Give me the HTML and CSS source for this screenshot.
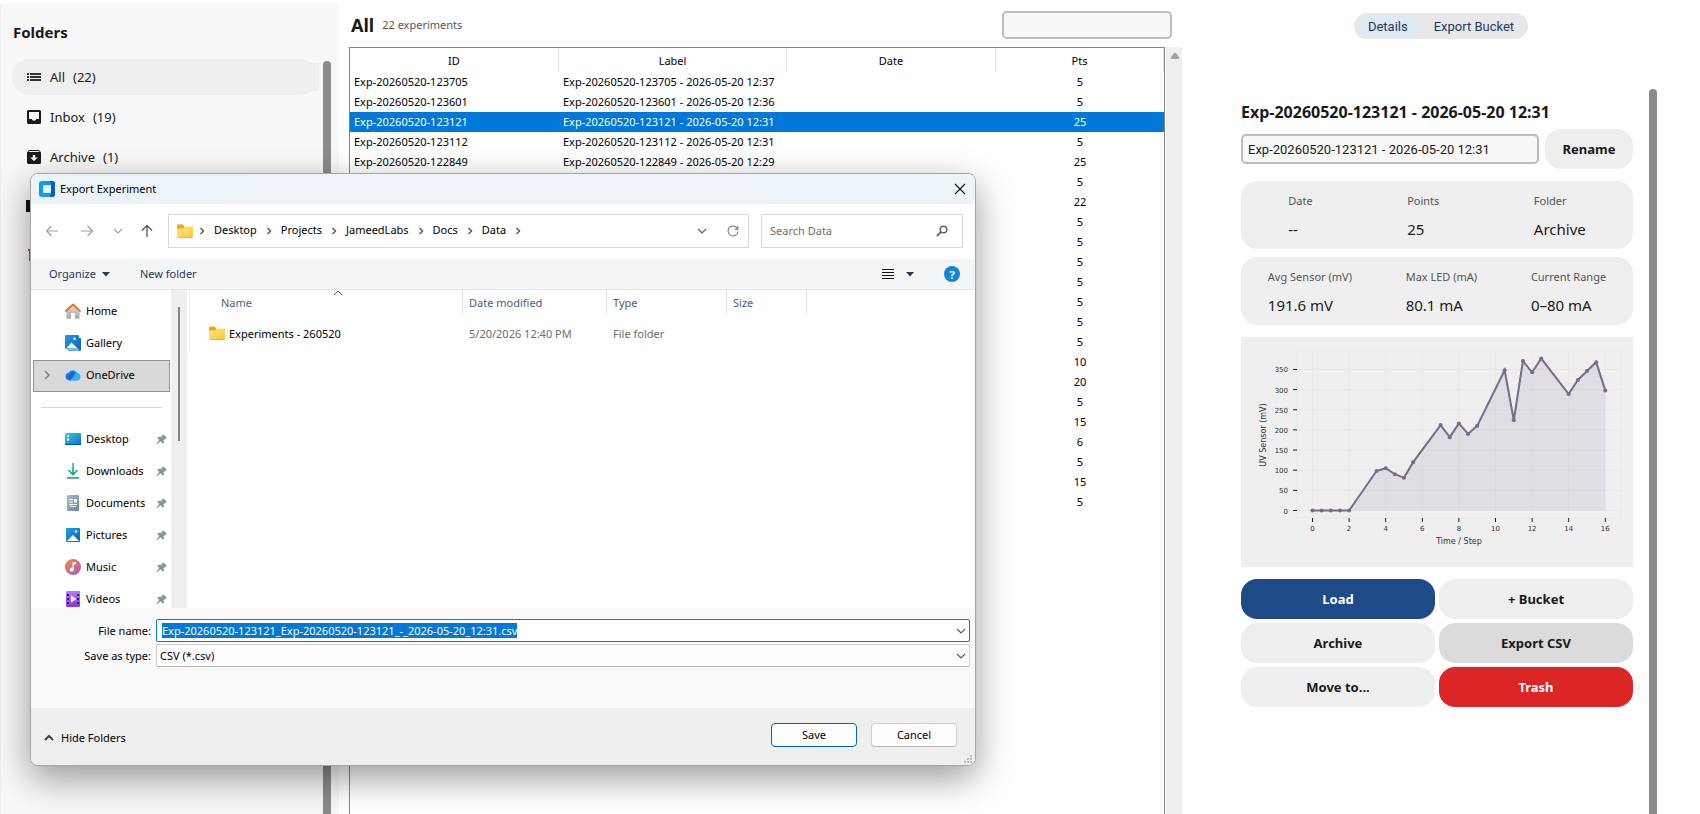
FILE: index.html
```
<!DOCTYPE html>
<html lang="en">

<head>
  <meta charset="UTF-8">
  <meta name="viewport" content="width=device-width, initial-scale=1.0">
  <title>Experiments</title>

  <link rel="stylesheet" href="styles.css">
</head>

<body>
  <div class="app">
    <aside class="sidebar">
      <div class="sidebar-main">
        <h2>Folders</h2>
        <nav class="folders">
          <button class="folder active">
            <svg width="16" height="16" viewBox="0 0 16 16" fill="#333"><path d="M1 4h2v2H1zM1 7h2v2H1zM1 10h2v2H1zM4 4h11v2H4zM4 7h11v2H4zM4 10h11v2H4z"/></svg>
            <span>All</span><span>(22)</span>
          </button>
          <button class="folder">
            <svg width="16" height="16" viewBox="0 0 16 16" fill="#1a1a1a"><path fill-rule="evenodd" d="M2.500 1h11A1.500 1.500 0 0 1 15 2.500v11a1.500 1.500 0 0 1-1.500 1.500h-11A1.500 1.500 0 0 1 1 13.500v-11A1.500 1.500 0 0 1 2.500 1zM3 3v7h2.700a2.400 2.400 0 0 0 4.600 0H13V3z"/></svg>
            <span>Inbox</span><span>(19)</span>
          </button>
          <button class="folder">
            <svg width="16" height="16" viewBox="0 0 16 16" fill="#1a1a1a"><path fill-rule="evenodd" d="M3 1h10l2 2.500v10a1.500 1.500 0 0 1-1.500 1.500h-11A1.500 1.500 0 0 1 1 13.500v-10zM3.200 2l-.7 1h11l-.7-1zM6.800 6v2.500H4.200L8 12l3.800-3.500H9.200V6z"/></svg>
            <span>Archive</span><span>(1)</span>
          </button>
          <button class="folder spaced" aria-label="Folder">
            <svg width="16" height="16" viewBox="0 0 16 16"><path fill="#111" d="M0 2h16v12H0z"/></svg>
          </button>
          <button class="folder spaced" aria-label="Trash">
            <svg width="16" height="16" viewBox="0 0 16 16" fill="#d9442f"><path d="M2 2h12v2H2zM3 4h10v10H3z"/></svg>
          </button>
        </nav>
      </div>
      <div class="thumb sidebar-thumb"></div>
    </aside>

    <main class="experiments">
      <header class="list-head">
        <h1>All</h1>
        <span class="count">22 experiments</span>
        <input type="text" class="filter" aria-label="Filter experiments">
      </header>
      <div class="list">
        <div class="table-box">
          <table>
            <thead>
              <tr><th class="c-id">ID</th><th class="c-label">Label</th><th class="c-date">Date</th><th>Pts</th></tr>
            </thead>
            <tbody>
              <tr><td>Exp-20260520-123705</td><td>Exp-20260520-123705 - 2026-05-20 12:37</td><td></td><td>5</td></tr>
              <tr><td>Exp-20260520-123601</td><td>Exp-20260520-123601 - 2026-05-20 12:36</td><td></td><td>5</td></tr>
              <tr class="selected"><td>Exp-20260520-123121</td><td>Exp-20260520-123121 - 2026-05-20 12:31</td><td></td><td>25</td></tr>
              <tr><td>Exp-20260520-123112</td><td>Exp-20260520-123112 - 2026-05-20 12:31</td><td></td><td>5</td></tr>
              <tr><td>Exp-20260520-122849</td><td>Exp-20260520-122849 - 2026-05-20 12:29</td><td></td><td>25</td></tr>
              <tr><td></td><td></td><td></td><td>5</td></tr>
              <tr><td></td><td></td><td></td><td>22</td></tr>
              <tr><td></td><td></td><td></td><td>5</td></tr>
              <tr><td></td><td></td><td></td><td>5</td></tr>
              <tr><td></td><td></td><td></td><td>5</td></tr>
              <tr><td></td><td></td><td></td><td>5</td></tr>
              <tr><td></td><td></td><td></td><td>5</td></tr>
              <tr><td></td><td></td><td></td><td>5</td></tr>
              <tr><td></td><td></td><td></td><td>5</td></tr>
              <tr><td></td><td></td><td></td><td>10</td></tr>
              <tr><td></td><td></td><td></td><td>20</td></tr>
              <tr><td></td><td></td><td></td><td>5</td></tr>
              <tr><td></td><td></td><td></td><td>15</td></tr>
              <tr><td></td><td></td><td></td><td>6</td></tr>
              <tr><td></td><td></td><td></td><td>5</td></tr>
              <tr><td></td><td></td><td></td><td>15</td></tr>
              <tr><td></td><td></td><td></td><td>5</td></tr>
            </tbody>
          </table>
        </div>
        <div class="table-scroll">
          <svg width="10" height="8" viewBox="0 0 10 8"><path fill="#a3a3a3" d="M4 1h2l3 4v2H1V5z"/></svg>
        </div>
      </div>
    </main>

    <section class="details">
      <div class="tabs">
        <button class="tab on">Details</button>
        <button class="tab">Export Bucket</button>
      </div>
      <div class="details-scroll">
        <div class="details-body">
          <h3>Exp-20260520-123121 - 2026-05-20 12:31</h3>
          <div class="rename">
            <input type="text" aria-label="Experiment label" value="Exp-20260520-123121 - 2026-05-20 12:31">
            <button class="btn">Rename</button>
          </div>
          <div class="card">
            <div class="stat"><span>Date</span><b>--</b></div>
            <div class="stat"><span>Points</span><b>25</b></div>
            <div class="stat"><span>Folder</span><b>Archive</b></div>
          </div>
          <div class="card">
            <div class="stat"><span>Avg Sensor (mV)</span><b>191.6 mV</b></div>
            <div class="stat"><span>Max LED (mA)</span><b>80.1 mA</b></div>
            <div class="stat"><span>Current Range</span><b>0–80 mA</b></div>
          </div>
          <svg class="chart" id="chart" viewBox="0 0 392 230">
            <rect class="frame" x="56" y="14" width="324" height="167"/>
          </svg>
          <div class="actions">
            <button class="btn load">Load</button>
            <button class="btn">+ Bucket</button>
            <button class="btn">Archive</button>
            <button class="btn pressed">Export CSV</button>
            <button class="btn">Move to...</button>
            <button class="btn trash">Trash</button>
          </div>
        </div>
        <div class="thumb"></div>
      </div>
    </section>
  </div>

  <svg class="defs" width="0" height="0">
    <defs>
      <linearGradient id="gFolder" x1="0" y1="0" x2="1" y2="1"><stop offset="0" stop-color="#ffe59a"/><stop offset="1" stop-color="#ffc62e"/></linearGradient>
      <linearGradient id="gBlue" x1="0" y1="0" x2="1" y2="1"><stop offset="0" stop-color="#1f9fe8"/><stop offset="1" stop-color="#0a66b8"/></linearGradient>
      <linearGradient id="gDesk" x1="0" y1="0" x2="1" y2="1"><stop offset="0" stop-color="#33d1dc"/><stop offset="1" stop-color="#0f6cc4"/></linearGradient>
      <linearGradient id="gHome" x1="0" y1="0" x2="0" y2="1"><stop offset="0" stop-color="#e0e0e0"/><stop offset="1" stop-color="#a8a8a8"/></linearGradient>
      <linearGradient id="gMusic" x1="0" y1="0" x2="1" y2="1"><stop offset="0" stop-color="#f58a4b"/><stop offset="1" stop-color="#a95bb5"/></linearGradient>
      <linearGradient id="gVideo" x1="0" y1="0" x2="0" y2="1"><stop offset="0" stop-color="#b57cf5"/><stop offset="1" stop-color="#8738dd"/></linearGradient>
      <linearGradient id="gDoc" x1="0" y1="0" x2="1" y2="1"><stop offset="0" stop-color="#a9bdd3"/><stop offset="1" stop-color="#6a85a5"/></linearGradient>
      <linearGradient id="gCloud" x1="0" y1="0" x2="1" y2="0"><stop offset="0" stop-color="#1c6fe8"/><stop offset="1" stop-color="#0ac4ff"/></linearGradient>
      <linearGradient id="gDown" x1="0" y1="0" x2="0" y2="1"><stop offset="0" stop-color="#35c98b"/><stop offset="1" stop-color="#12a08f"/></linearGradient>
      <symbol id="folder" viewBox="0 0 16 16"><path fill="#f0a800" d="M0 2.500A1 1 0 0 1 1 1.500h4.500L7.500 3.500V6H0z"/><path fill="url(#gFolder)" d="M0 5.500h6L8 3.500h7a1 1 0 0 1 1 1v9a1 1 0 0 1-1 1H1a1 1 0 0 1-1-1z"/><path fill="#e5a823" d="M.5 14h15v.8H.5z"/></symbol>
      <symbol id="pin" viewBox="0 0 12 12"><path fill="#8a97a0" d="M7 1l4.200 4-1.500.5-2 2 .1 2.500-1 .7-2.300-2.200L1 11.300l-.7-.6 3-3.700L1.200 4.800l.9-1 2.600.2 1.800-1.800z"/></symbol>
      <symbol id="chev" viewBox="0 0 12 12"><path fill="none" stroke="#5e5e5e" stroke-width="1.200" d="M2 4l4 4 4-4"/></symbol>
      <symbol id="crumb" viewBox="0 0 8 8"><path fill="none" stroke="#555" stroke-width="1.400" d="M2.500 1l3 3-3 3"/></symbol>
    </defs>
  </svg>

  <div class="dialog" role="dialog" aria-label="Export Experiment">
    <div class="titlebar">
      <svg width="16" height="16" viewBox="0 0 16 16"><rect width="16" height="16" rx="3" fill="#0a9bff"/><path fill="#0560b8" d="M11 0h2a3 3 0 0 1 3 3v10a3 3 0 0 1-3 3h-2l1-3V3z"/><rect x="4" y="4" width="8" height="8" rx="1" fill="#eaf6ff"/></svg>
      <span>Export Experiment</span>
      <button class="close" aria-label="Close"><svg width="12" height="12" viewBox="0 0 12 12"><path stroke="#111" stroke-width="1.200" d="M1 1l10 10M11 1L1 11"/></svg></button>
    </div>

    <div class="navbar">
      <button aria-label="Back"><svg width="14" height="14" viewBox="0 0 14 14" fill="none" stroke="#a0a0a0" stroke-width="1.200"><path d="M13 7H1.500M6.500 2l-5 5 5 5"/></svg></button>
      <button aria-label="Forward"><svg width="14" height="14" viewBox="0 0 14 14" fill="none" stroke="#a0a0a0" stroke-width="1.200"><path d="M1 7h11.500M7.500 2l5 5-5 5"/></svg></button>
      <button class="small" aria-label="Recent locations"><svg width="12" height="12"><use href="#chev" opacity=".6"/></svg></button>
      <button class="up" aria-label="Up"><svg width="14" height="14" viewBox="0 0 14 14" fill="none" stroke="#555" stroke-width="1.300"><path d="M7 13V1.500M2 6.500l5-5 5 5"/></svg></button>
      <div class="address">
        <svg width="16" height="16"><use href="#folder"/></svg>
        <svg width="8" height="8"><use href="#crumb"/></svg>
        <a href="#">Desktop</a>
        <svg width="8" height="8"><use href="#crumb"/></svg>
        <a href="#">Projects</a>
        <svg width="8" height="8"><use href="#crumb"/></svg>
        <a href="#">JameedLabs</a>
        <svg width="8" height="8"><use href="#crumb"/></svg>
        <a href="#">Docs</a>
        <svg width="8" height="8"><use href="#crumb"/></svg>
        <a href="#">Data</a>
        <svg width="8" height="8"><use href="#crumb"/></svg>
        <button class="history" aria-label="Previous locations"><svg width="12" height="12"><use href="#chev"/></svg></button>
        <button aria-label="Refresh"><svg width="12" height="12" viewBox="0 0 14 14" fill="none" stroke="#707070" stroke-width="1.200"><path d="M12.500 5A5.800 5.800 0 1 0 12.800 7.500M12.600 1v4H8.800"/></svg></button>
      </div>
      <div class="search">
        <input type="text" placeholder="Search Data" aria-label="Search Data">
        <svg width="12" height="12" viewBox="0 0 12 12" fill="none" stroke="#666"><circle cx="7.500" cy="4.500" r="3.300" stroke-width="1.500"/><path stroke-width="1.800" d="M5 7L.8 11.200"/></svg>
      </div>
    </div>

    <div class="toolbar">
      <button><span>Organize</span><svg width="8" height="5" viewBox="0 0 8 5"><path fill="#1e395b" d="M0 0h8L4 4.500z"/></svg></button>
      <button><span>New folder</span></button>
      <button class="view" aria-label="View"><svg width="12" height="11" viewBox="0 0 12 11"><path fill="#111" d="M0 0h12v1H0zM0 3h12v1H0zM0 6h12v1H0zM0 9h12v1H0z"/></svg></button>
      <button aria-label="More views"><svg width="8" height="5" viewBox="0 0 8 5"><path fill="#1e395b" d="M0 0h8L4 4.500z"/></svg></button>
      <button class="help" aria-label="Help">?</button>
    </div>

    <div class="browser">
      <nav class="places">
        <a href="#"><svg width="16" height="16" viewBox="0 0 16 16"><path fill="url(#gHome)" d="M1.500 7L8 1.500 14.500 7v8a.8.8 0 0 1-.8.8H10V10H6v5.800H2.300a.8.8 0 0 1-.8-.8z"/><path fill="none" stroke="#e8731f" stroke-width="1.800" stroke-linecap="round" stroke-linejoin="round" d="M1 8l7-6.500L15 8"/></svg><span>Home</span></a>
        <a href="#"><svg width="16" height="16" viewBox="0 0 16 16"><path fill="#1c6cb8" d="M3 3h12a1 1 0 0 1 1 1v11a1 1 0 0 1-1 1H3z"/><path fill="#8db9e2" d="M2 14h12v1.800H3z"/><rect width="14" height="14" rx="1" fill="url(#gBlue)"/><path fill="#eaf5ff" d="M1 13.500L6.500 7.500 13 13.500z"/><circle cx="9.500" cy="3.800" r="1.200" fill="#fff"/></svg><span>Gallery</span></a>
        <a href="#" class="current"><svg class="arrow" width="8" height="10" viewBox="0 0 8 10"><path fill="none" stroke="#808080" stroke-width="1.500" d="M2 1l4 4-4 4"/></svg><svg width="16" height="16" viewBox="0 0 16 16"><path fill="url(#gCloud)" d="M4 13.500A4 4 0 0 1 3.500 5.700 5 5 0 0 1 12.300 6 3.800 3.800 0 0 1 12.200 13.500z"/><path fill="#1a4fc7" opacity=".7" d="M5 13.300L10.500 5.500 7.500 4.500 2.500 10z"/><path fill="#4bb4ff" d="M5.500 13.500L11 6.500l3.500 2-2 5z" opacity=".6"/></svg><span>OneDrive</span></a>
        <hr>
        <a href="#"><svg width="16" height="16" viewBox="0 0 16 16"><rect y="2" width="16" height="12" rx="1" fill="url(#gDesk)"/><path fill="#fff" d="M2 4h2v2H2zM2 7.500h2v2H2z"/><path fill="#0b4f96" d="M0 13h16v1H0z"/></svg><span>Desktop</span><svg class="pin" width="12" height="12"><use href="#pin"/></svg></a>
        <a href="#"><svg width="16" height="16" viewBox="0 0 16 16"><path fill="none" stroke="url(#gDown)" stroke-width="1.700" d="M3.500 7L8 11.500 12.500 7M8.010 0L8 11.500"/><path fill="#22b889" d="M2 14h12v1.800H2z"/></svg><span>Downloads</span><svg class="pin" width="12" height="12"><use href="#pin"/></svg></a>
        <a href="#"><svg width="16" height="16" viewBox="0 0 16 16"><rect x="2" width="12" height="16" rx="1" fill="url(#gDoc)"/><path fill="#fff" d="M4 4h4v1H4zM4 6.500h4v1H4zM9 4h3v3.500H9zM4 9h8v1H4zM5 11h6v1H5z"/></svg><span>Documents</span><svg class="pin" width="12" height="12"><use href="#pin"/></svg></a>
        <a href="#"><svg width="16" height="16" viewBox="0 0 16 16"><rect x="1" y="1" width="14" height="14" rx="1" fill="url(#gBlue)"/><path fill="#fff" d="M2 14l6-6 6 6z"/><circle cx="11" cy="4.500" r="1.200" fill="#fff"/></svg><span>Pictures</span><svg class="pin" width="12" height="12"><use href="#pin"/></svg></a>
        <a href="#"><svg width="16" height="16" viewBox="0 0 16 16"><circle cx="8" cy="8" r="8" fill="url(#gMusic)"/><path fill="#fff" d="M7.500 3.500L11 3v2.200L8.800 5.600V10.500a2 2 0 1 1-1.300-1.800z"/></svg><span>Music</span><svg class="pin" width="12" height="12"><use href="#pin"/></svg></a>
        <a href="#"><svg width="16" height="16" viewBox="0 0 16 16"><rect x="1" width="14" height="16" rx="1" fill="url(#gVideo)"/><path fill="#3b1a6e" d="M2 3h2v2H2zM2 7h2v2H2zM2 11h2v2H2zM12 3h2v2h-2zM12 7h2v2h-2zM12 11h2v2h-2z"/><path fill="#fff" d="M6 4.500L11.500 8 6 11.500z"/></svg><span>Videos</span><svg class="pin" width="12" height="12"><use href="#pin"/></svg></a>
      </nav>
      <div class="places-scroll"><div></div></div>
      <table class="files">
        <thead>
          <tr><th class="f-name">Name<svg class="sort" width="10" height="6" viewBox="0 0 10 6"><path fill="none" stroke="#555" d="M1 5l4-4 4 4"/></svg></th><th class="f-date">Date modified</th><th class="f-type">Type</th><th class="f-size">Size</th><th></th></tr>
        </thead>
        <tbody>
          <tr><td><div class="file"><svg width="16" height="16"><use href="#folder"/></svg>Experiments - 260520</div></td><td>5/20/2026 12:40 PM</td><td>File folder</td><td></td><td></td></tr>
        </tbody>
      </table>
    </div>

    <div class="fields">
      <label for="fileName">File name:</label>
      <div class="combo focused">
        <input type="text" id="fileName" value="Exp-20260520-123121_Exp-20260520-123121_-_2026-05-20_12:31.csv">
        <svg width="12" height="12"><use href="#chev"/></svg>
      </div>
      <label for="fileType">Save as type:</label>
      <div class="combo">
        <select id="fileType"><option>CSV (*.csv)</option></select>
        <svg width="12" height="12"><use href="#chev"/></svg>
      </div>
    </div>

    <div class="dialog-foot">
      <button class="hide"><svg width="10" height="8" viewBox="0 0 10 8"><path fill="none" stroke="#444" stroke-width="2" d="M1 6l4-4 4 4"/></svg><span>Hide Folders</span></button>
      <button class="push default">Save</button>
      <button class="push">Cancel</button>
      <svg class="grip" width="8" height="8" viewBox="0 0 8 8"><path fill="#bdbdbd" d="M6 0h2v2H6zM3 3h2v2H3zM6 3h2v2H6zM0 6h2v2H0zM3 6h2v2H3zM6 6h2v2H6z"/></svg>
    </div>
  </div>

  <script src="script.js"></script>
</body>

</html>
```
FILE: styles.css
```
* {
  box-sizing: border-box;
}

body {
  margin: 0;
  background: #ffffff;
  color: #1a1a1a;
  font-family: "Noto Sans", "Open Sans", sans-serif;
  font-size: 11px;
  overflow: hidden;
}

h1, h2, h3 {
  margin: 0;
}

button, input, select {
  font: inherit;
  color: inherit;
}

button {
  border: none;
  background: none;
  padding: 0;
}

a {
  color: inherit;
  text-decoration: none;
}

svg {
  display: block;
  flex: none;
}

.defs {
  position: absolute;
}

.app {
  display: grid;
  grid-template-columns: 339px 1fr 518px;
  height: 100vh;
}

.thumb {
  width: 8px;
  background: #8b8b8b;
  border-radius: 4px 4px 0 0;
}

/* sidebar */
.sidebar {
  display: flex;
  margin-top: 3px;
  padding-right: 8px;
  background: #f8f8f8;
  border-left: 1px solid #eeeeee;
}

.sidebar-main {
  flex: 1;
  padding: 18px 4px 0 11px;
}

.sidebar h2 {
  padding-left: 1px;
  font-size: 15px;
  line-height: 22px;
}

.sidebar-thumb {
  margin-top: 58px;
}

.folders {
  display: flex;
  flex-direction: column;
  gap: 4px;
  margin-top: 16px;
}

.folder {
  display: flex;
  position: relative;
  align-items: center;
  gap: 8px;
  height: 36px;
  padding: 0 14px;
  border-radius: 18px;
  font-size: 13px;
}

.folder.active {
  background: #efefef;
}

.folder.active::after {
  content: "";
  position: absolute;
  right: 0;
  top: 4px;
  width: 16px;
  height: 28px;
  background: #efefef;
}

.folder.spaced {
  margin-top: 9px;
}

/* experiment list */
.experiments {
  display: flex;
  flex-direction: column;
  min-height: 0;
  padding-left: 10px;
}

.list-head {
  display: flex;
  align-items: center;
  gap: 8px;
  padding: 11px 10px 8px 2px;
}

.list-head h1 {
  font-size: 18px;
  line-height: 28px;
}

.count {
  padding-bottom: 2px;
  color: #555555;
}

.filter {
  width: 170px;
  height: 28px;
  margin-left: auto;
  border: 2px solid #bdbdbd;
  border-radius: 5px;
  background: #f8f8f8;
}

.list {
  display: flex;
  flex: 1;
  min-height: 0;
}

.table-box {
  flex: 1;
  border: 1px solid #828790;
  border-bottom: none;
}

.table-box table {
  width: 100%;
  table-layout: fixed;
  border-spacing: 0;
  color: #000000;
}

.table-box th {
  height: 24px;
  padding: 0;
  border-right: 1px solid #e5e5e5;
  font-weight: normal;
}

.c-id, .c-date {
  width: 209px;
}

.c-label {
  width: 228px;
}

.table-box td {
  height: 20px;
  padding: 0 4px 2px;
  white-space: nowrap;
}

.table-box td:last-child {
  text-align: center;
}

.table-box .selected {
  background: #0078d7;
  color: #ffffff;
}

.table-scroll {
  width: 17px;
  padding: 5px 4px;
  background: #efefef;
  border-left: 1px solid #ffffff;
}

/* details */
.details {
  display: flex;
  flex-direction: column;
  min-height: 0;
}

.tabs {
  display: flex;
  align-self: center;
  margin-top: 13px;
  padding: 3px;
  border-radius: 13px;
  background: #e8e8e8;
  color: #1f3a5f;
  font-family: Roboto, sans-serif;
  font-size: 13px;
}

.tab {
  height: 20px;
  padding: 0 11px;
  border-radius: 10px;
}

.tab + .tab {
  padding-left: 15px;
}

.tab.on {
  background: #dfe9f6;
}

.details-scroll {
  display: flex;
  flex: 1;
  gap: 16px;
  min-height: 0;
  margin-top: 50px;
  padding: 0 43px 0 59px;
}

.details-body {
  flex: 1;
  padding-top: 12px;
}

.details h3 {
  font-size: 16px;
  line-height: 22px;
}

.rename {
  display: flex;
  align-items: center;
  gap: 6px;
  margin: 6px 0 12px;
}

.rename input {
  flex: 1;
  min-width: 0;
  height: 30px;
  padding: 0 5px;
  border: 2px solid #bdbdbd;
  border-radius: 5px;
  background: #f8f8f8;
  font-family: Roboto, sans-serif;
  font-size: 13px;
}

.btn {
  height: 40px;
  border-radius: 16px;
  background: #efefef;
  font-size: 13px;
  font-weight: bold;
}

.rename .btn {
  width: 88px;
}

.card {
  display: flex;
  justify-content: space-around;
  height: 68px;
  margin-bottom: 8px;
  padding-top: 10px;
  border-radius: 16px;
  background: #efefef;
}

.stat span {
  display: block;
  color: #555555;
  line-height: 20px;
}

.stat b {
  display: block;
  margin-top: 7px;
  font-size: 15px;
  font-weight: normal;
  line-height: 22px;
}

.chart {
  width: 100%;
  margin: 12px 0;
  background: #efefef;
  font-family: "DejaVu Sans", sans-serif;
}

.frame, .grid {
  fill: none;
  stroke: #e9e9e9;
}

.tick {
  stroke: #222222;
}

.tick-label, .axis-label {
  fill: #333333;
}

.tick-label {
  font-size: 7px;
}

.axis-label {
  font-size: 8px;
}

.area {
  fill: #7a6b8a;
  fill-opacity: 0.13;
}

.line {
  fill: none;
  stroke: #7a6b8a;
  stroke-width: 2;
}

.dot {
  fill: #7a6b8a;
}

.actions {
  display: grid;
  grid-template-columns: 1fr 1fr;
  gap: 4px;
}

.btn.load {
  background: #1e4b87;
  color: #ffffff;
}

.btn.pressed {
  background: #dbdbdb;
}

.btn.trash {
  background: #dc2626;
  color: #ffffff;
}

/* export dialog, floats over the app */
.dialog {
  position: absolute;
  left: 30px;
  top: 173px;
  width: 946px;
  border: 1px solid #a5a5a5;
  border-radius: 8px;
  overflow: hidden;
  background: #ffffff;
  color: #000000;
  box-shadow: 0 12px 36px rgba(0, 0, 0, 0.4);
}

.dialog span, .address a, .search input {
  padding-bottom: 2px;
}

.titlebar {
  display: flex;
  align-items: center;
  gap: 5px;
  height: 30px;
  padding: 0 9px 0 8px;
  background: linear-gradient(90deg, #ecf4f8, #eef3fa 50%, #ecf4f8);
}

.close {
  margin-left: auto;
}

.navbar {
  display: flex;
  align-items: center;
  height: 55px;
  padding: 0 12px 2px 14px;
}

.navbar > button {
  width: 14px;
  margin-right: 21px;
}

.navbar > .small {
  width: 12px;
  margin-right: 16px;
  margin-left: -3px;
}

.navbar > .up {
  margin-right: 14px;
}

.address, .search {
  display: flex;
  align-items: center;
  height: 34px;
  border: 1px solid #d9d9d9;
}

.address {
  flex: 1;
  gap: 8px;
  padding: 0 12px 0 8px;
}

.address svg:first-child {
  margin-right: -3px;
}

.history {
  margin-left: auto;
  margin-right: 14px;
}

.search {
  width: 202px;
  margin-left: 12px;
  padding: 0 14px 0 8px;
}

.search input {
  flex: 1;
  min-width: 0;
  padding: 0;
  border: none;
  outline: none;
}

.search input::placeholder {
  color: #6d6d6d;
}

.toolbar {
  display: flex;
  align-items: center;
  gap: 30px;
  height: 31px;
  padding: 0 15px 0 18px;
  background: #f4f5f7;
  border-bottom: 1px solid #e5e5e5;
  color: #1e395b;
}

.toolbar button {
  display: flex;
  align-items: center;
  gap: 6px;
}

.toolbar .view {
  margin-left: auto;
  margin-right: -18px;
}

.toolbar .help {
  justify-content: center;
  width: 16px;
  height: 16px;
  border-radius: 8px;
  background: #0f86dc;
  color: #ffffff;
  font-weight: bold;
}

.browser {
  display: flex;
  height: 318px;
}

.places {
  width: 140px;
  padding: 6px 1px 0 2px;
  overflow: hidden;
}

.places a {
  display: flex;
  position: relative;
  align-items: center;
  gap: 5px;
  height: 32px;
  padding: 0 2px 2px 32px;
}

.places .current {
  padding-left: 31px;
  border: 1px solid #919191;
  background: #d9d9d9;
}

.places a span {
  padding-bottom: 1px;
}

.places .arrow {
  position: absolute;
  left: 9px;
}

.places hr {
  height: 1px;
  margin: 15px 8px 16px;
  border: none;
  background: #d5d5d5;
}

.places .pin {
  margin-left: auto;
}

.places-scroll {
  width: 16px;
  padding: 17px 7px 0;
  background: #efefef;
}

.places-scroll div {
  width: 2px;
  height: 134px;
  background: #858585;
}

.files {
  flex: 1;
  align-self: flex-start;
  margin-left: 2px;
  table-layout: fixed;
  border-spacing: 0;
  border-left: 1px solid #f0f0f0;
}

.files th {
  position: relative;
  height: 25px;
  padding: 0 6px;
  border-right: 1px solid #e2e2e2;
  color: #4c607a;
  font-weight: normal;
  text-align: left;
}

.files th:last-child {
  border: none;
}

.files .f-name {
  width: 273px;
  padding-left: 31px;
}

.f-date {
  width: 144px;
}

.f-type {
  width: 120px;
}

.f-size {
  width: 80px;
}

.sort {
  position: absolute;
  left: 143px;
  top: 0;
}

.files td {
  height: 38px;
  padding: 0 6px 2px;
  color: #6d6d6d;
}

.files td:first-child {
  padding-left: 19px;
  color: #000000;
}

.file {
  display: flex;
  align-items: center;
  gap: 4px;
}

.fields {
  display: grid;
  grid-template-columns: 120px 1fr;
  gap: 2px 5px;
  align-items: center;
  padding: 11px 5px 41px 0;
  background: #f9f9f9;
}

.fields label {
  text-align: right;
}

.combo {
  display: flex;
  align-items: center;
  height: 23px;
  padding: 0 2px 0 3px;
  border: 1px solid #cfcfcf;
  border-bottom-color: #b5b5b5;
  border-radius: 2px;
  background: #fdfdfd;
}

.combo.focused {
  padding-left: 5px;
  border-color: #0078d4;
  background: #ffffff;
}

.combo input, .combo select {
  flex: 1;
  min-width: 0;
  padding: 0;
  border: none;
  outline: none;
  background: none;
  appearance: none;
}

.combo input::selection {
  background: #0078d7;
  color: #ffffff;
}

.dialog-foot {
  display: flex;
  position: relative;
  gap: 14px;
  height: 57px;
  padding: 15px 18px 0 13px;
  background: #efefef;
}

.hide {
  display: flex;
  align-items: center;
  gap: 7px;
  height: 30px;
  margin-right: auto;
}

.push {
  width: 86px;
  height: 24px;
  padding-bottom: 2px;
  border: 1px solid #d0d0d0;
  border-bottom-color: #bababa;
  border-radius: 4px;
  background: #fdfdfd;
}

.push.default {
  border-color: #0067c0;
}

.grip {
  position: absolute;
  right: 3px;
  bottom: 2px;
}
```
FILE: script.js
```
let chart = document.getElementById('chart');
let points = [
  [0, 0], [0.5, 0], [1, 0], [1.5, 0], [2, 0], [3.5, 98], [4, 105], [4.5, 90], [5, 81], [5.5, 120],
  [7, 212], [7.5, 182], [8, 216], [8.5, 190], [9, 210], [10.5, 348], [11, 224], [11.5, 371],
  [12, 343], [12.5, 377], [14, 289], [14.5, 324], [15, 346], [15.5, 368], [16, 298]
];

function px(x) {
  return 71.5 + x * 18.3;
}

function py(y) {
  return 173.5 - y * 0.403;
}

function add(name, attrs, text) {
  let el = document.createElementNS('http://www.w3.org/2000/svg', name);
  for (let key in attrs) {
    el.setAttribute(key, attrs[key]);
  }
  if (text !== undefined) {
    el.textContent = text;
  }
  chart.appendChild(el);
}

// x axis
for (let x = 0; x <= 16; x += 2) {
  add('path', { class: 'grid', d: 'M' + px(x) + ' 14V181' });
  add('path', { class: 'tick', d: 'M' + px(x) + ' 181v4' });
  add('text', { class: 'tick-label', x: px(x), y: 194, 'text-anchor': 'middle' }, x);
}

// y axis
for (let y = 0; y <= 350; y += 50) {
  add('path', { class: 'grid', d: 'M56 ' + py(y) + 'H380' });
  add('path', { class: 'tick', d: 'M52 ' + py(y) + 'h4' });
  add('text', { class: 'tick-label', x: 47, y: py(y) + 3, 'text-anchor': 'end' }, y);
}

add('text', { class: 'axis-label', x: 218, y: 207, 'text-anchor': 'middle' }, 'Time / Step');
add('text', { class: 'axis-label', transform: 'translate(25 98) rotate(-90)', 'text-anchor': 'middle' }, 'UV Sensor (mV)');

let path = points.map(function (p) {
  return px(p[0]) + ',' + py(p[1]);
}).join(' ');
add('polygon', { class: 'area', points: path + ' ' + px(16) + ',' + py(0) });
add('polyline', { class: 'line', points: path });
points.forEach(function (p) {
  add('circle', { class: 'dot', cx: px(p[0]), cy: py(p[1]), r: 2 });
});

// file name starts focused and selected
let fileName = document.getElementById('fileName');
fileName.focus();
fileName.setSelectionRange(0, fileName.value.length);
```
